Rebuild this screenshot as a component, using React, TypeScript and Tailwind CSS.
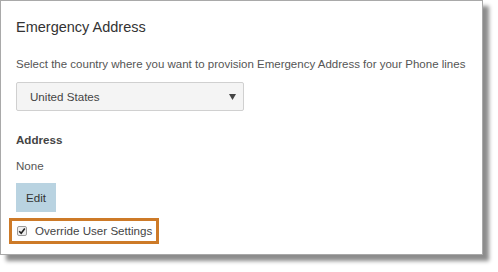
const font = { fontFamily: '"Liberation Sans", Arial, sans-serif' };

const App = () => {
  return (
    <div className="w-[498px] h-[272px] bg-white overflow-hidden" style={font}>
      <div className="w-[483px] h-[255px] bg-white border border-[#a9a9a9] shadow-[6px_6px_4px_rgba(0,0,0,0.45)] pl-[15px] pt-[16px]">
        <h2 className="text-[14.5px] leading-[20px] text-[#333] whitespace-nowrap">Emergency Address</h2>

        <p className="mt-[19px] text-[11.5px] leading-[16px] text-[#555] whitespace-nowrap">
          Select the country where you want to provision Emergency Address for your Phone lines
        </p>

        <div className="mt-[10px] w-[228px] h-[29px] flex items-center justify-between pl-[13px] pr-[7px] bg-[#f4f4f4] border border-[#d0d0d0] rounded-[2px]">
          <span className="text-[11.6px] text-[#444]">United States</span>
          <svg width="7" height="6" viewBox="0 0 7 6">
            <path d="M0 0h7L3.5 6z" fill="#444" />
          </svg>
        </div>

        <div className="mt-[21px] text-[11.6px] leading-[16px] font-bold text-[#444]">Address</div>
        <div className="mt-[10px] text-[11.6px] leading-[16px] text-[#555]">None</div>

        <button className="mt-[9px] w-[40px] h-[29px] bg-[#b9d3e1] text-[11.6px] text-[#333] flex items-center justify-center">
          Edit
        </button>

        <div className="mt-[6px] -ml-[7px] w-[150px] h-[26px] border-[3px] border-[#cd7a28] flex items-center pl-[5px] gap-[8px] whitespace-nowrap">
          <span className="w-[10px] h-[10px] shrink-0 border border-[#9a9a9a] bg-[#eee] rounded-[2px] flex items-center justify-center">
            <svg width="8" height="8" viewBox="0 0 8 8">
              <path d="M1.2 4.2 3.2 6.2 6.8 1.6" fill="none" stroke="#222" strokeWidth="1.6" />
            </svg>
          </span>
          <span className="text-[11.6px] leading-[16px] text-[#444]">Override User Settings</span>
        </div>
      </div>
    </div>
  );
};

export default App;
